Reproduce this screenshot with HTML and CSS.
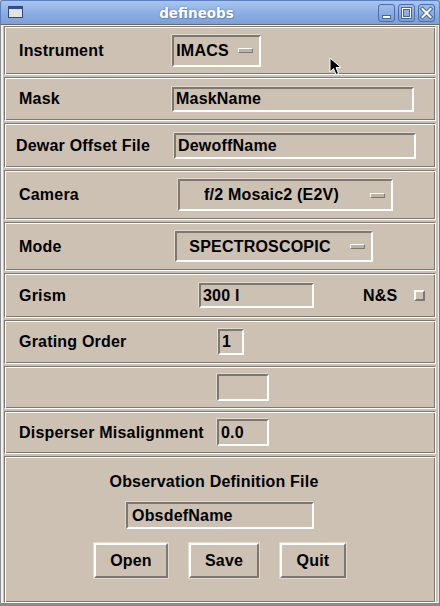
FILE: index.html
```html
<!DOCTYPE html>
<html>
<head>
<meta charset="utf-8">
<title>defineobs</title>
<link rel="stylesheet" href="styles.css">
</head>
<body>
<div class="window">
  <div class="titlebar">
    <svg class="app-icon" width="15" height="12" viewBox="0 0 15 12">
      <rect x="0.5" y="0.5" width="14" height="11" fill="#e4e4de" stroke="#34467e"/>
      <rect x="1" y="1" width="13" height="2" fill="#2f4f9e"/>
    </svg>
    <div class="title">defineobs</div>
    <div class="wm-buttons">
      <div class="wm-btn">
        <svg width="17" height="18" viewBox="0 0 17 18"><rect x="4.5" y="11.5" width="8" height="3" fill="#fff" stroke="#4a66a0"/></svg>
      </div>
      <div class="wm-btn">
        <svg width="17" height="18" viewBox="0 0 17 18"><rect x="4.5" y="4.5" width="8" height="9" fill="none" stroke="#4a66a0" stroke-width="3"/><rect x="4.5" y="4.5" width="8" height="9" fill="none" stroke="#fff" stroke-width="1"/></svg>
      </div>
      <div class="wm-btn">
        <svg width="17" height="18" viewBox="0 0 17 18"><path d="M4.5 5 L12.5 13 M12.5 5 L4.5 13" stroke="#4a66a0" stroke-width="4" stroke-linecap="square"/><path d="M4.5 5 L12.5 13 M12.5 5 L4.5 13" stroke="#fff" stroke-width="2" stroke-linecap="square"/></svg>
      </div>
    </div>
  </div>
  <div class="client">
    <div class="frame f1">
      <span class="lbl l-instr">Instrument</span>
      <div class="sunken menubutton mb-imacs"><span class="mb-text">IMACS</span><span class="indicator"></span></div>
    </div>
    <div class="frame f2">
      <span class="lbl l-mask">Mask</span>
      <div class="sunken entry e-mask">MaskName</div>
    </div>
    <div class="frame f3">
      <span class="lbl l-dewar">Dewar Offset File</span>
      <div class="sunken entry e-dewar">DewoffName</div>
    </div>
    <div class="frame f4">
      <span class="lbl l-camera">Camera</span>
      <div class="sunken menubutton mb-camera"><span class="mb-text">f/2 Mosaic2 (E2V)</span><span class="indicator"></span></div>
    </div>
    <div class="frame f5">
      <span class="lbl l-mode">Mode</span>
      <div class="sunken menubutton mb-mode"><span class="mb-text">SPECTROSCOPIC</span><span class="indicator"></span></div>
    </div>
    <div class="frame f6">
      <span class="lbl l-grism">Grism</span>
      <div class="sunken entry e-grism">300 l</div>
      <span class="ns-label">N&amp;S</span>
      <span class="checkbox"></span>
    </div>
    <div class="frame f7">
      <span class="lbl l-order">Grating Order</span>
      <div class="sunken entry e-order">1</div>
    </div>
    <div class="frame f8">
      <span class="lbl l-empty"></span>
      <div class="sunken entry e-small"></div>
    </div>
    <div class="frame f9">
      <span class="lbl l-disp">Disperser Misalignment</span>
      <div class="sunken entry e-small">0.0</div>
    </div>
    <div class="frame bottom">
      <div class="obs-title">Observation Definition File</div>
      <div class="sunken entry e-obs">ObsdefName</div>
      <div class="buttons">
        <div class="button b-open">Open</div>
        <div class="button b-save">Save</div>
        <div class="button b-quit">Quit</div>
      </div>
    </div>
  </div>
</div>
<svg class="cursor" width="14" height="20" viewBox="0 0 14 20">
  <path d="M1 1 L1 15 L4.5 11.5 L7 17.5 L9.5 16.5 L7 10.5 L12 10.5 Z" fill="#000" stroke="#fff" stroke-width="1"/>
</svg>
</body>
</html>
```
FILE: styles.css
```css
html, body {
  margin: 0;
  padding: 0;
}
body {
  width: 440px;
  height: 606px;
  overflow: hidden;
  position: relative;
  background: #cdc1b4;
  font-family: "Liberation Sans", Arial, Helvetica, sans-serif;
  font-weight: bold;
  font-size: 16px;
  letter-spacing: 0.2px;
  color: #000;
}
.window {
  width: 440px;
  height: 606px;
  display: flex;
  flex-direction: column;
}
.titlebar {
  height: 24px;
  box-sizing: border-box;
  flex: none;
  display: flex;
  align-items: center;
  background: linear-gradient(#a9c5ef, #8aaee3 55%, #7b9fd8);
  border: 1px solid #5d7fbf;
  border-bottom: none;
  border-radius: 3px 3px 0 0;
  padding-left: 7px;
}
.app-icon {
  flex: none;
  margin-top: -1px;
}
.title {
  flex: 1;
  text-align: center;
  color: #fff;
  font-family: "DejaVu Sans", sans-serif;
  font-size: 13.5px;
  font-weight: bold;
  letter-spacing: 0;
  text-shadow: 0 0 2px #5c79b4, 1px 1px 0 #6e8cc4;
  padding-right: 8px;
}
.wm-buttons {
  display: flex;
  gap: 3px;
  margin-right: 4px;
  margin-top: 1px;
}
.wm-btn {
  width: 17px;
  height: 18px;
  box-sizing: border-box;
  border: 1px solid #4e6ca6;
  border-radius: 3px;
  background: linear-gradient(#9fbdeb, #7c9fd6);
  display: flex;
  align-items: center;
  justify-content: center;
}
.wm-btn svg {
  display: block;
  margin: -1px;
}
.client {
  flex: 1;
  display: flex;
  flex-direction: column;
  gap: 2px;
  border-top: 1px solid #6c6964;
  border-left: 1px solid #8d8d8d;
  border-right: 1px solid #7a7a7a;
  border-bottom: 3px solid #8a8a8a;
  box-shadow: inset 2px 1px 0 #f2f2f2, inset -1px -1px 0 #ececec;
  padding: 1px 3px 0 3px;
}
.frame {
  box-sizing: border-box;
  flex: none;
  display: flex;
  align-items: center;
  border: 1px solid;
  border-color: #7d7871 #fff #fff #7d7871;
  box-shadow: inset 1px 1px 0 #fff, inset -1px -1px 0 #7d7871;
  padding-left: 14px;
}
.f1 { height: 49px; }
.f2 { height: 44px; }
.f3 { height: 45px; }
.f4 { height: 50px; }
.f5 { height: 49px; }
.f6 { height: 45px; }
.f7 { height: 44px; }
.f8 { height: 43px; }
.f9 { height: 43px; }
.bottom {
  flex: 1;
  flex-direction: column;
  align-items: center;
  justify-content: flex-start;
  padding: 16px 0 0 0;
}
.lbl {
  flex: none;
  white-space: nowrap;
}
.l-instr { width: 153px; }
.l-mask { width: 153px; }
.l-dewar { width: 158px; margin-left: -3px; }
.l-camera { width: 159px; }
.l-mode { width: 156px; }
.l-grism { width: 180px; }
.l-order { width: 199px; }
.l-empty { width: 198px; }
.l-disp { width: 198px; }

.sunken {
  box-sizing: border-box;
  border: 2px solid;
  border-color: #7d7871 #fff #fff #7d7871;
  box-shadow: -1px -1px 0 #e2d9cf;
  flex: none;
}
.entry {
  display: flex;
  align-items: center;
  padding-left: 2px;
  white-space: nowrap;
  overflow: hidden;
}
.e-mask { width: 242px; height: 25px; }
.e-dewar { width: 242px; height: 26px; }
.e-grism { width: 115px; height: 25px; }
.e-order { width: 26px; height: 26px; }
.e-small { width: 52px; height: 27px; }
.e-obs { width: 188px; height: 27px; padding-left: 4px; margin-top: 11px; }

.menubutton {
  display: flex;
  align-items: center;
  padding: 0 6px 0 2px;
}
.mb-text {
  flex: 1;
  text-align: center;
  white-space: nowrap;
}
.indicator {
  flex: none;
  width: 15px;
  height: 5px;
  box-sizing: border-box;
  margin-left: 9px;
  border: 1px solid;
  border-color: #fff #7d7871 #7d7871 #fff;
  background: #bdb2a6;
}
.mb-imacs { width: 89px; height: 32px; }
.mb-camera { width: 215px; height: 32px; }
.mb-mode { width: 198px; height: 31px; }

.ns-label {
  margin-left: 49px;
  flex: none;
}
.checkbox {
  flex: none;
  width: 11px;
  height: 11px;
  box-sizing: border-box;
  margin-left: 17px;
  border: 2px solid;
  border-color: #fff #7d7871 #7d7871 #fff;
  background: #cdc1b4;
}

.obs-title {
  white-space: nowrap;
  padding-right: 12px;
}
.buttons {
  display: flex;
  gap: 21px;
  margin-top: 14px;
}
.button {
  box-sizing: border-box;
  height: 35px;
  display: flex;
  align-items: center;
  justify-content: center;
  border: 2px solid;
  border-color: #fff #7d7871 #7d7871 #fff;
  box-shadow: 0 0 0 1px #e2d9cf;
}
.b-open { width: 74px; }
.b-save { width: 70px; }
.b-quit { width: 66px; }

.cursor {
  position: absolute;
  left: 329px;
  top: 57px;
}
```
